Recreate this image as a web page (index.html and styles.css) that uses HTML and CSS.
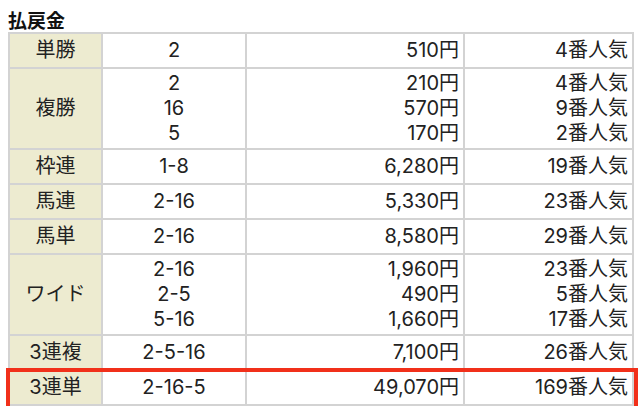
FILE: index.html
```html
<!DOCTYPE html>
<html lang="ja">
<head>
<meta charset="utf-8">
<link rel="stylesheet" href="styles.css">
</head>
<body>
<div class="wrap">
  <h2 class="title">払戻金</h2>
  <div class="table-box">
    <table class="payout">
      <colgroup>
        <col class="c1"><col class="c2"><col class="c3"><col class="c4">
      </colgroup>
      <tr class="single"><th>単勝</th><td class="num">2</td><td class="yen">510円</td><td class="pop">4番人気</td></tr>
      <tr class="multi"><th>複勝</th><td class="num">2<br>16<br>5</td><td class="yen">210円<br>570円<br>170円</td><td class="pop">4番人気<br>9番人気<br>2番人気</td></tr>
      <tr class="single"><th>枠連</th><td class="num">1-8</td><td class="yen">6,280円</td><td class="pop">19番人気</td></tr>
      <tr class="single"><th>馬連</th><td class="num">2-16</td><td class="yen">5,330円</td><td class="pop">23番人気</td></tr>
      <tr class="single"><th>馬単</th><td class="num">2-16</td><td class="yen">8,580円</td><td class="pop">29番人気</td></tr>
      <tr class="multi"><th>ワイド</th><td class="num">2-16<br>2-5<br>5-16</td><td class="yen">1,960円<br>490円<br>1,660円</td><td class="pop">23番人気<br>5番人気<br>17番人気</td></tr>
      <tr class="single"><th>3連複</th><td class="num">2-5-16</td><td class="yen">7,100円</td><td class="pop">26番人気</td></tr>
      <tr class="single last"><th>3連単</th><td class="num">2-16-5</td><td class="yen">49,070円</td><td class="pop">169番人気</td></tr>
    </table>
    <div class="highlight"></div>
  </div>
</div>
</body>
</html>
```
FILE: styles.css
```css
html, body {
  margin: 0;
  padding: 0;
  background: #ffffff;
}
.wrap {
  padding: 8px 8px 0 8px;
  font-family: "Noto Sans CJK JP", "Noto Sans", sans-serif;
  color: #222222;
}
.title {
  margin: 0;
  font-size: 19px;
  line-height: 24px;
  font-weight: bold;
  color: #111111;
}
.table-box {
  position: relative;
  width: 624px;
}
.payout {
  width: 624px;
  table-layout: fixed;
  border-collapse: collapse;
  border: 2px solid #d3d3d3;
  font-family: Inter, "Noto Sans CJK JP", sans-serif;
  font-size: 20px;
  line-height: 25px;
  color: #222222;
}
.c1 { width: 93px; }
.c2 { width: 144px; }
.c3 { width: 218px; }
.c4 { width: 169px; }
.payout th,
.payout td {
  border: 2px solid #d3d3d3;
  padding: 4px 4px;
  font-weight: normal;
  vertical-align: middle;
}
.payout tr.multi th,
.payout tr.multi td {
  padding: 2px 4px;
}
.payout th {
  background: #edebd0;
  text-align: center;
}
.num { text-align: center; }
.yen, .pop { text-align: right; }
.highlight {
  position: absolute;
  left: -2px;
  right: -6px;
  bottom: -4px;
  height: 42px;
  box-sizing: border-box;
  border: 4px solid #f1301a;
  pointer-events: none;
}
```
